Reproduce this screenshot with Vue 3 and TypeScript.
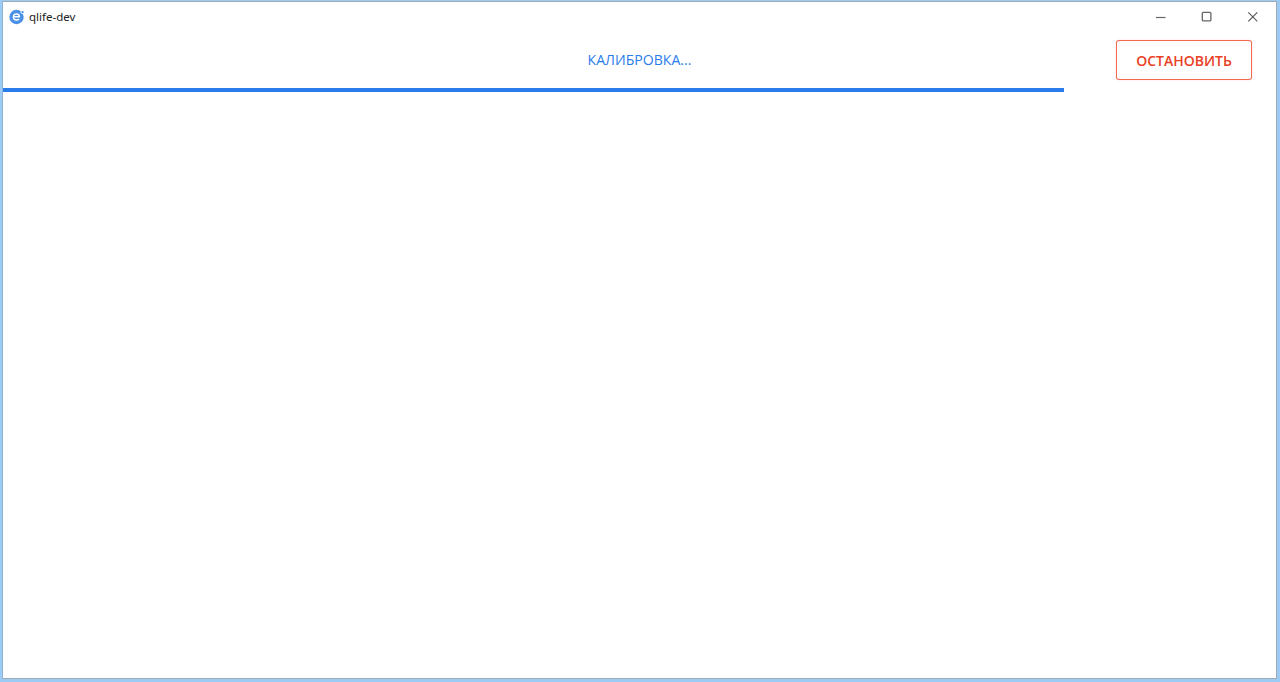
<script setup lang="ts">
const title: string = 'qlife-dev'
const progress: number = 1061
</script>

<template>
  <div class="window">
    <div class="frame">
      <header class="titlebar">
        <div class="app">
          <svg class="logo" width="16" height="16" viewBox="0 0 16 16">
            <circle cx="7.5" cy="8" r="7.2" fill="#4a90e8" />
            <path d="M12.6 1.6l2.4 2.4-2 1.2-1.6-2z" fill="#fff" />
            <circle cx="13.6" cy="3.2" r="1.1" fill="#4a90e8" />
            <path d="M4.4 7.8h6c-.1-1.8-1.3-2.8-2.9-2.8-1.8 0-3.1 1.3-3.1 3s1.3 3 3.1 3c1 0 1.9-.3 2.6-1" fill="none" stroke="#fff" stroke-width="1.4" />
          </svg>
          <span class="name">{{ title }}</span>
        </div>
        <div class="controls">
          <svg class="ctl" width="46" height="30" viewBox="0 0 46 30"><path d="M18 15.5h9.5" stroke="#666" stroke-width="1.2" /></svg>
          <svg class="ctl" width="46" height="30" viewBox="0 0 46 30"><rect x="18.3" y="10.3" width="8.6" height="8.6" rx="1" fill="none" stroke="#666" stroke-width="1.3" /></svg>
          <svg class="ctl" width="46" height="30" viewBox="0 0 46 30"><path d="M18.3 10.3l9 9M27.3 10.3l-9 9" stroke="#555" stroke-width="1.1" /></svg>
        </div>
      </header>
      <main class="content">
        <div class="top">
          <span></span>
          <span class="label">КАЛИБРОВКА...</span>
          <div class="actions"><button class="stop" type="button">ОСТАНОВИТЬ</button></div>
        </div>
        <div class="bar" :style="{ width: progress + 'px' }"></div>
      </main>
    </div>
  </div>
</template>

<style>
html, body { margin: 0; height: 100%; background: #fff; overflow: hidden; }
</style>

<style scoped>
.window {
  width: 1280px;
  height: 682px;
  box-sizing: border-box;
  border-style: solid;
  border-color: #9ccbf5;
  border-width: 1px 3px 3px 2px;
  font-family: "Open Sans", "Noto Sans", sans-serif;
}
.frame {
  height: 100%;
  box-sizing: border-box;
  background: #fff;
  border: 1px solid #9fa9b2;
  border-left-color: #8db4d6;
  display: flex;
  flex-direction: column;
}
.titlebar {
  height: 30px;
  flex: none;
  display: flex;
  justify-content: space-between;
  align-items: center;
}
.app { display: flex; align-items: center; gap: 4px; padding-left: 6px; }
.logo { display: block; margin-top: -1px; }
.name { font-size: 11.5px; color: #222; font-family: "Noto Sans", sans-serif; padding-bottom: 1px; }
.controls { display: flex; margin-top: -1px; }
.ctl { display: block; }
.content { flex: 1; min-height: 0; }
.top {
  height: 56px;
  box-sizing: border-box;
  display: grid;
  grid-template-columns: 1fr auto 1fr;
  align-items: center;
}
.label { font-size: 14.1px; color: #2a7cea; padding-bottom: 2px; }
.actions { display: flex; justify-content: flex-end; padding-right: 24px; }
.stop {
  width: 136px;
  height: 40px;
  box-sizing: border-box;
  border: 1px solid #f4694f;
  border-radius: 3px;
  box-shadow: 0 0 1px #f8967f;
  background: #fff;
  color: #ea4024;
  font: 600 14px "Open Sans", sans-serif;
  padding: 0;
}
.bar { height: 4px; background: #2a7cea; }
</style>
